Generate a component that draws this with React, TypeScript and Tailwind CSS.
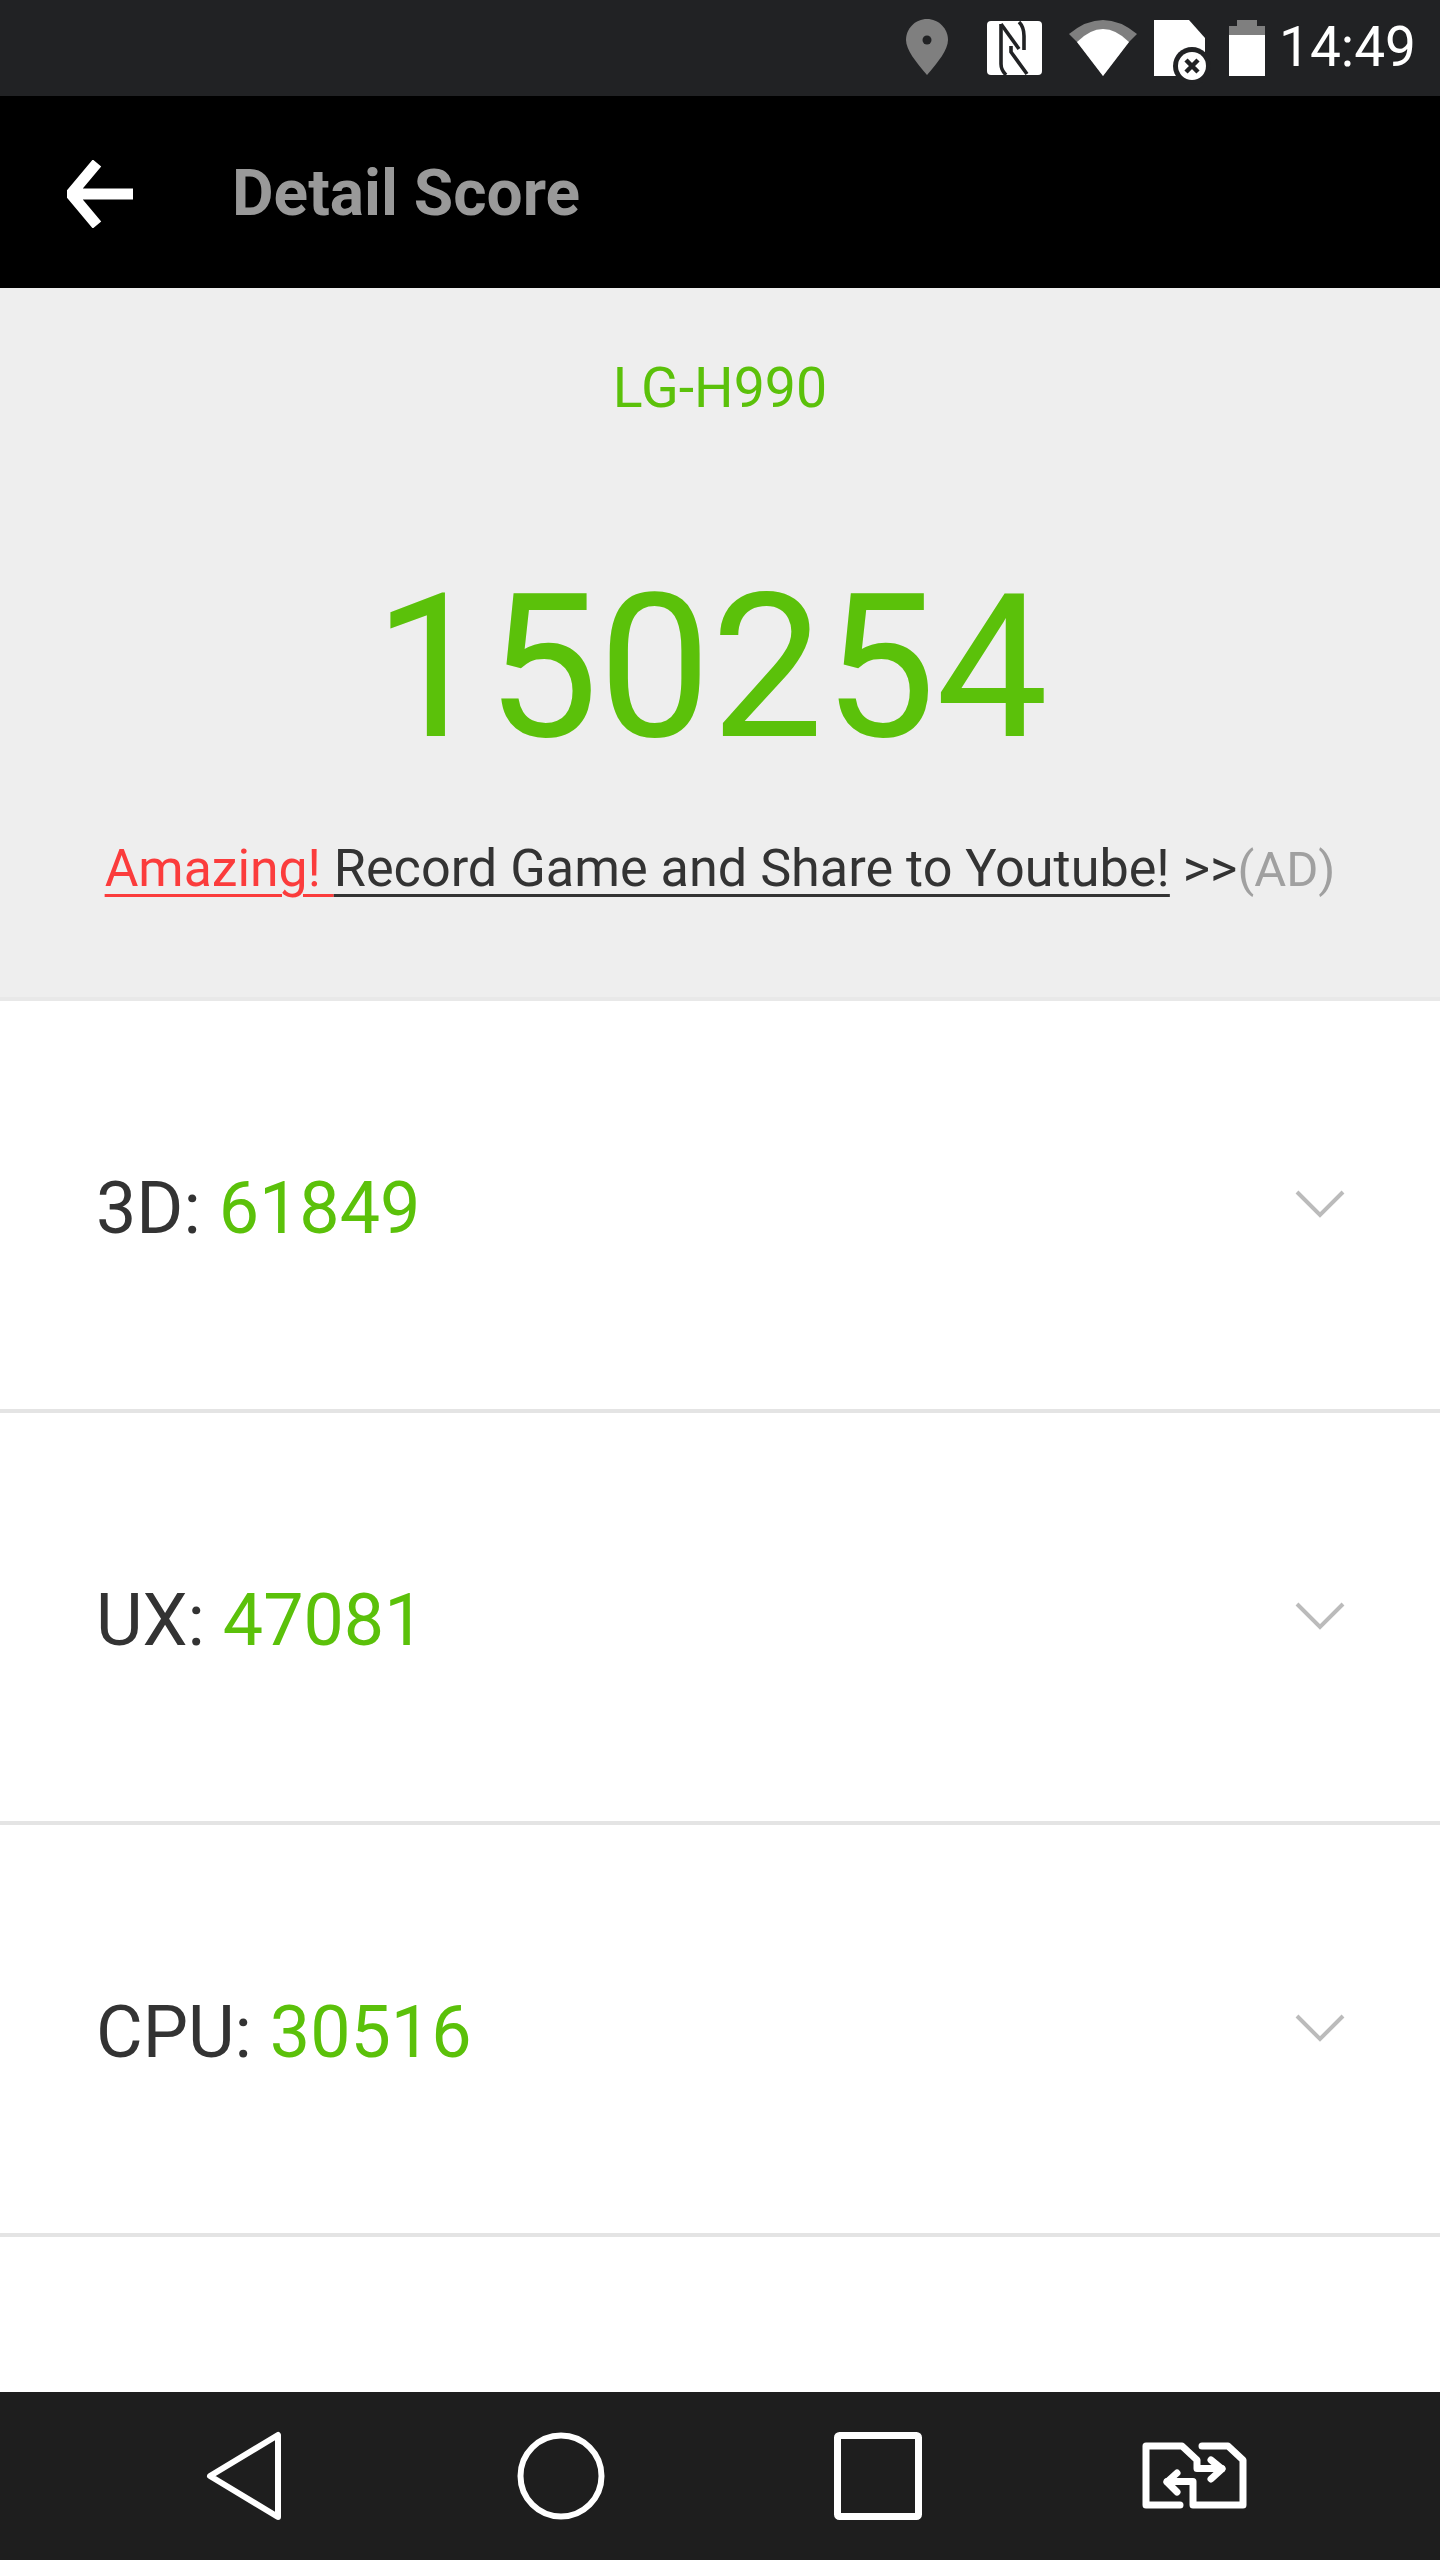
import React from "react";

const rows = [
  { label: "3D:", value: "61849" },
  { label: "UX:", value: "47081" },
  { label: "CPU:", value: "30516" },
];

function StatusIcons() {
  return (
    <svg width="360" height="96" viewBox="0 0 360 96" className="shrink-0">
      <path d="M21 19C9.5 19 0 28.5 0 40C0 50 10 62 21 75C32 62 42 50 42 40C42 28.5 32.5 19 21 19Z" fill="#7f7f7f" />
      <circle cx="21" cy="40" r="4.5" fill="#212224" />
      <rect x="81" y="21" width="55" height="54" rx="4" fill="#fff" />
      <g fill="none" stroke="#212224" strokeWidth="3.6">
        <path d="M95 24V64Q95 70 100 75" />
        <path d="M95 24L113 49" />
        <path d="M105 46V52L121 74" />
        <path d="M113 22Q118 27 118 36V50" />
      </g>
      <path d="M163 34Q197 6 231 34L223 42L197 76L171 42Z" fill="#7f7f7f" />
      <path d="M171 42Q197 16 223 42L197 76Z" fill="#fff" />
      <path d="M248 20H283L299 38V76H248Z" fill="#fff" />
      <circle cx="286" cy="66" r="19" fill="#212224" />
      <circle cx="286" cy="66" r="14" fill="#fff" />
      <path d="M280 60L292 72M292 60L280 72" stroke="#212224" strokeWidth="4.5" />
      <path d="M331 20H351V26H359V35H323V26H331Z" fill="#7f7f7f" />
      <rect x="323" y="35" width="36" height="41" fill="#fff" />
    </svg>
  );
}

export default function App() {
  return (
    <div className="w-[1440px] h-[2560px] flex flex-col bg-white overflow-hidden font-['Roboto',sans-serif]">
      <div className="h-[96px] bg-[#212224] flex items-center shrink-0">
        <div className="ml-[906px]">
          <StatusIcons />
        </div>
        <span className="ml-[13px] text-[55px] leading-none text-white font-normal -mt-[1px]">14:49</span>
      </div>

      <div className="h-[192px] bg-black flex items-center shrink-0">
        <svg width="68" height="68" viewBox="0 0 68 68" className="ml-[67px] shrink-0 mt-[4px]">
          <path d="M66 34H4M30 3L4 34L30 65" fill="none" stroke="#fff" strokeWidth="11" strokeLinejoin="miter" />
        </svg>
        <span className="ml-[97px] text-[64px] leading-none font-bold text-[#999999] mt-[4px]">Detail Score</span>
      </div>

      <div className="h-[713px] bg-[#eeeeee] border-b-[4px] border-[#e8e8e8] flex flex-col items-center shrink-0">
        <div className="mt-[71px] text-[55.5px] leading-[60px] font-normal text-[#5bc10a]">LG-H990</div>
        <div className="mt-[149px] -ml-[18px] text-[200px] leading-[200px] font-normal text-[#5bc10a]">150254</div>
        <div className="mt-[71px] text-[52.2px] leading-[60px] font-normal text-[#333333] whitespace-nowrap">
          <span className="text-[#fb3c3c] text-[51.7px] underline decoration-[3px] underline-offset-[8px]">Amazing! </span>
          <span className="underline decoration-[3px] underline-offset-[8px]">Record Game and Share to Youtube!</span>{" "}
          &gt;&gt;<span className="text-[#a0a0a0] text-[49px]">(AD)</span>
        </div>
      </div>

      {rows.map((r) => (
        <div key={r.label} className="h-[412px] border-b-[4px] border-[#e4e4e4] flex items-start justify-between shrink-0">
          <div className="ml-[96px] mt-[168px] text-[71.8px] leading-[80px] font-normal text-[#333333]">
            {r.label} <span className="text-[#5bc10a]">{r.value}</span>
          </div>
          <svg width="52" height="32" viewBox="0 0 52 32" className="mr-[94px] mt-[188px]">
            <path d="M3 3L26 26L49 3" fill="none" stroke="#bbbbbb" strokeWidth="4" />
          </svg>
        </div>
      ))}

      <div className="flex-1" />

      <div className="h-[168px] bg-[#1e1e1e] flex items-center justify-center shrink-0">
        <div className="w-[317px] flex justify-center -ml-[2px]">
          <svg width="78" height="90" viewBox="0 0 78 90">
            <path d="M73 4V86L5 45Z" fill="none" stroke="#fff" strokeWidth="6" strokeLinejoin="round" />
          </svg>
        </div>
        <div className="w-[317px] flex justify-center">
          <svg width="88" height="88" viewBox="0 0 88 88">
            <circle cx="44" cy="44" r="40.5" fill="none" stroke="#fff" strokeWidth="6" />
          </svg>
        </div>
        <div className="w-[317px] flex justify-center">
          <svg width="88" height="88" viewBox="0 0 88 88">
            <rect x="3.5" y="3.5" width="81" height="81" rx="2" fill="none" stroke="#fff" strokeWidth="7" />
          </svg>
        </div>
        <div className="w-[317px] flex justify-center">
          <svg width="110" height="90" viewBox="0 0 110 90" className="-mt-[2px]">
            <g fill="none" stroke="#fff" strokeWidth="7" strokeLinecap="round" strokeLinejoin="round">
              <path d="M40 75H6V16H42L57 30V38.5H82" />
              <path d="M71 30L82 39L71 49" />
              <path d="M62 16H88L103 30V75H53V51.5H27" />
              <path d="M37 43L27 52L37 62" />
            </g>
          </svg>
        </div>
      </div>
    </div>
  );
}
